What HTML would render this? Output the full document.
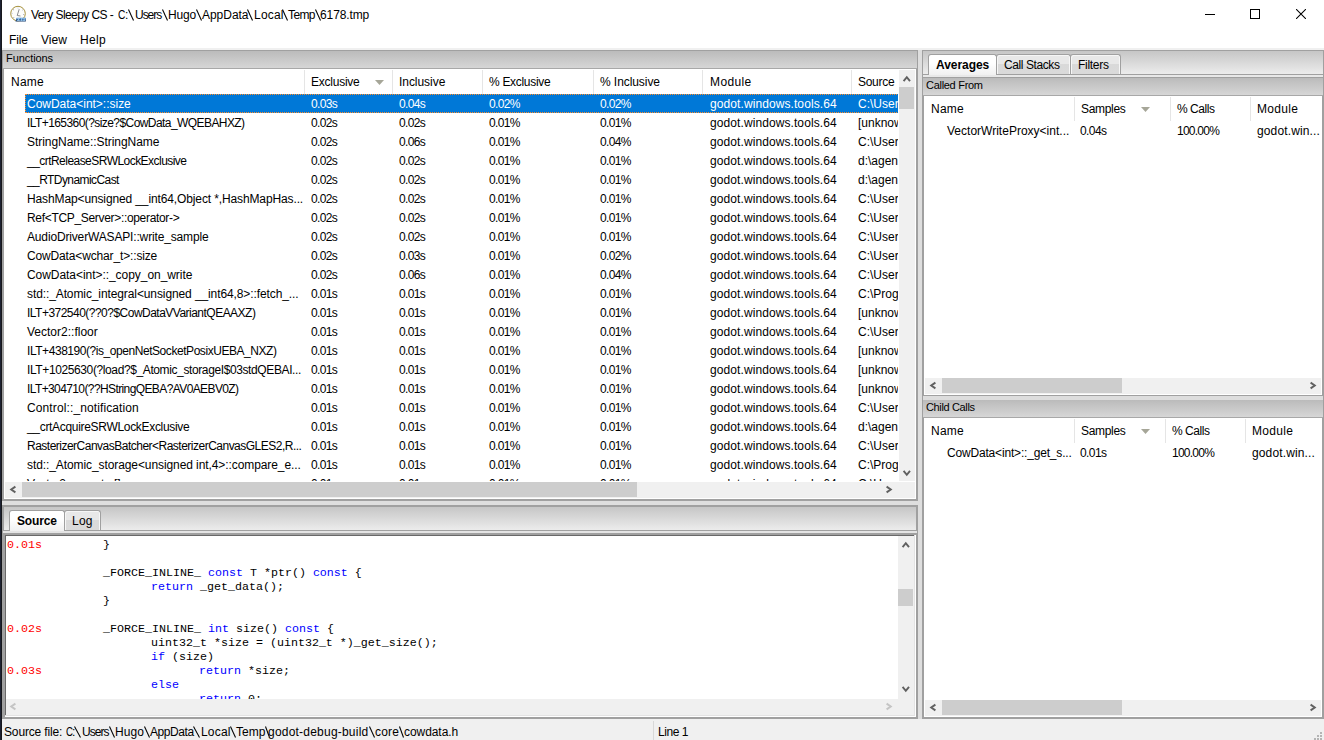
<!DOCTYPE html><html><head><meta charset="utf-8"><title>Very Sleepy CS</title><style>
*{margin:0;padding:0;box-sizing:border-box}
html,body{width:1324px;height:740px;overflow:hidden;background:#f0f0f0;position:relative;font-family:"Liberation Sans",sans-serif;font-size:12px;color:#000}
.a{position:absolute}
.t{position:absolute;white-space:pre;line-height:15px;height:15px}
.cap{position:absolute;background:linear-gradient(#bbbbbb,#d6d6d6)}
.sep{position:absolute;width:1px;background:#e5e5e5}
.mono{position:absolute;white-space:pre;font-family:"Liberation Mono",monospace;font-size:11.67px;line-height:14px;height:14px}
.kw{color:#0000ff}
.red{color:#ff0000}
svg{position:absolute}
svg.full{left:0;top:0;pointer-events:none}
.tab{position:absolute;border:1px solid #a0a0a0;border-bottom:none;border-radius:3px 3px 0 0}
.tabA{background:linear-gradient(#fff 40%,#f0f0f0)}
.tabI{background:linear-gradient(#e8e8e8 47%,#d9d9d9 47%,#dadada);box-shadow:inset 1px 1px 0 #f6f6f6,inset -1px 0 0 #f6f6f6}
</style></head><body>
<div class="a" style="left:0px;top:0px;width:1324px;height:48px;background:#fff;"></div>
<div class="a" style="left:0px;top:0px;width:1px;height:740px;background:#1d2232;"></div>
<div class="a" style="left:1px;top:0px;width:1px;height:740px;background:#17181c;"></div>
<svg style="left:9px;top:5px" width="18" height="18" viewBox="0 0 18 18">
<defs><linearGradient id="zg" x1="0" y1="0" x2="0" y2="1"><stop offset="0" stop-color="#4f8ccc"/><stop offset="1" stop-color="#1b3764"/></linearGradient></defs><circle cx="9" cy="8.6" r="7.3" fill="#fdfdfb" stroke="#a08a30" stroke-width="0.95"/>
<circle cx="9" cy="2.9" r="0.5" fill="#c0c0d0"/><circle cx="4.5" cy="4.8" r="0.5" fill="#9090a8"/><circle cx="3" cy="8.3" r="0.5" fill="#a0a0b8"/><circle cx="4.8" cy="12.4" r="0.5" fill="#a0a0b8"/><circle cx="14.5" cy="9.4" r="0.5" fill="#a0a0b8"/><circle cx="13.7" cy="5" r="0.5" fill="#b0b0c0"/>
<path d="M10.2 4.2L8.2 10.5L11.5 11" fill="none" stroke="#8c8c90" stroke-width="1"/>
<path d="M6.5 16.2L7.6 12.8L16.8 12.8L16.8 16.6L6.5 16.6Z" fill="url(#zg)"/>
<path d="M8.2 13.6L10.6 13.6L8.4 15.6L10.8 15.6M11.6 13.6L13.4 13.6L11.8 15.6L13.6 15.6M14.2 13.6L15.8 13.6L14.3 15.6L16 15.6" fill="none" stroke="#9fd0f6" stroke-width="0.9"/>
</svg>
<div class="t" style="left:118px;top:8px;transform:scaleX(0.85);transform-origin:0 0;">C</div>
<div class="t" style="left:31px;top:8px;letter-spacing:-0.572px;">Very Sleepy CS -</div>
<div class="t" style="left:125px;top:8px;">:</div>
<div class="t" style="left:135px;top:8px;letter-spacing:-1.036px;">Users</div>
<div class="t" style="left:168px;top:8px;letter-spacing:-0.163px;">Hugo</div>
<div class="t" style="left:202px;top:8px;letter-spacing:-0.034px;">AppData</div>
<div class="t" style="left:254px;top:8px;letter-spacing:0.203px;">Local</div>
<div class="t" style="left:288px;top:8px;letter-spacing:-0.615px;">Temp</div>
<div class="t" style="left:320px;top:8px;letter-spacing:-0.107px;">6178.tmp</div>
<svg style="left:128px;top:9px" width="6" height="12"><path d="M0.5 0.5L5.5 11.5" stroke="#000" stroke-width="1.05" fill="none"/></svg>
<svg style="left:162px;top:9px" width="6" height="12"><path d="M0.5 0.5L5.5 11.5" stroke="#000" stroke-width="1.05" fill="none"/></svg>
<svg style="left:196px;top:9px" width="6" height="12"><path d="M0.5 0.5L5.5 11.5" stroke="#000" stroke-width="1.05" fill="none"/></svg>
<svg style="left:247px;top:9px" width="6" height="12"><path d="M0.5 0.5L5.5 11.5" stroke="#000" stroke-width="1.05" fill="none"/></svg>
<svg style="left:282px;top:9px" width="6" height="12"><path d="M0.5 0.5L5.5 11.5" stroke="#000" stroke-width="1.05" fill="none"/></svg>
<svg style="left:315px;top:9px" width="6" height="12"><path d="M0.5 0.5L5.5 11.5" stroke="#000" stroke-width="1.05" fill="none"/></svg>
<div class="a" style="left:1205px;top:14px;width:10px;height:1px;background:#000;"></div>
<div class="a" style="left:1250px;top:9px;width:10px;height:10px;border:1px solid #000"></div>
<svg style="left:1296px;top:9px" width="10" height="10" viewBox="0 0 10 10"><path d="M0 0L10 10M10 0L0 10" stroke="#000" stroke-width="1.05"/></svg>
<div class="t" style="left:9px;top:33px;letter-spacing:-0.115px;">File</div>
<div class="t" style="left:41px;top:33px;letter-spacing:0.068px;">View</div>
<div class="t" style="left:80px;top:33px;letter-spacing:0.371px;">Help</div>
<div class="a" style="left:918px;top:50px;width:4px;height:669px;background:#dedede;"></div>
<div class="a" style="left:2px;top:501px;width:916px;height:4px;background:#dedede;"></div>
<div class="a" style="left:2px;top:50px;width:916px;height:451px;background:#a0a0a0;"></div>
<div class="a" style="left:3px;top:51px;width:914px;height:17px;background:;background:linear-gradient(#bbbbbb,#d6d6d6)"></div>
<div class="a" style="left:3px;top:68px;width:914px;height:1px;background:#a8a8a8;"></div>
<div class="a" style="left:4px;top:69px;width:912px;height:430px;background:#fff;"></div>
<div class="t" style="left:6px;top:51px;font-size:11px;letter-spacing:-0.075px;">Functions</div>
<div class="a" style="left:304px;top:70px;width:1px;height:24px;background:#e5e5e5;"></div>
<div class="a" style="left:392px;top:70px;width:1px;height:24px;background:#e5e5e5;"></div>
<div class="a" style="left:482px;top:70px;width:1px;height:24px;background:#e5e5e5;"></div>
<div class="a" style="left:593px;top:70px;width:1px;height:24px;background:#e5e5e5;"></div>
<div class="a" style="left:702px;top:70px;width:1px;height:24px;background:#e5e5e5;"></div>
<div class="a" style="left:851px;top:70px;width:1px;height:24px;background:#e5e5e5;"></div>
<div class="t" style="left:11px;top:75px;letter-spacing:0.228px;">Name</div>
<div class="t" style="left:311px;top:75px;letter-spacing:-0.236px;">Exclusive</div>
<div class="t" style="left:399px;top:75px;letter-spacing:-0.048px;">Inclusive</div>
<div class="t" style="left:489px;top:75px;letter-spacing:-0.309px;">% Exclusive</div>
<div class="t" style="left:600px;top:75px;letter-spacing:-0.070px;">% Inclusive</div>
<div class="t" style="left:710px;top:75px;letter-spacing:0.388px;">Module</div>
<div class="t" style="left:858px;top:75px;letter-spacing:-0.286px;">Source</div>
<svg style="left:375px;top:80px" width="9" height="5" viewBox="0 0 9 5"><path d="M0 0H9L4.5 5Z" fill="#a6a698"/></svg>
<div class="a" style="left:0px;top:94px;width:898px;height:387px;overflow:hidden">
<div class="a" style="left:25px;top:0px;width:880px;height:19px;background:#0078d7;outline:1px dotted #ff8c28;outline-offset:-1px"></div>
<div class="t" style="left:27px;top:3px;color:#fff;letter-spacing:-0.015px;">CowData&lt;int&gt;::size</div>
<div class="t" style="left:311px;top:3px;color:#fff;letter-spacing:-0.665px;">0.03s</div>
<div class="t" style="left:399px;top:3px;color:#fff;letter-spacing:-0.665px;">0.04s</div>
<div class="t" style="left:489px;top:3px;color:#fff;letter-spacing:-0.658px;">0.02%</div>
<div class="t" style="left:600px;top:3px;color:#fff;letter-spacing:-0.658px;">0.02%</div>
<div class="t" style="left:710px;top:3px;color:#fff;letter-spacing:0.088px;">godot.windows.tools.64</div>
<div class="t" style="left:858px;top:3px;color:#fff;width:41px;overflow:hidden;">C:\User</div>
<div class="t" style="left:27px;top:22px;letter-spacing:-0.572px;">ILT+165360(?size?$CowData_WQEBAHXZ)</div>
<div class="t" style="left:311px;top:22px;letter-spacing:-0.665px;">0.02s</div>
<div class="t" style="left:399px;top:22px;letter-spacing:-0.665px;">0.02s</div>
<div class="t" style="left:489px;top:22px;letter-spacing:-0.658px;">0.01%</div>
<div class="t" style="left:600px;top:22px;letter-spacing:-0.658px;">0.01%</div>
<div class="t" style="left:710px;top:22px;letter-spacing:0.088px;">godot.windows.tools.64</div>
<div class="t" style="left:858px;top:22px;width:41px;overflow:hidden;">[unknow</div>
<div class="t" style="left:27px;top:41px;letter-spacing:-0.047px;">StringName::StringName</div>
<div class="t" style="left:311px;top:41px;letter-spacing:-0.665px;">0.02s</div>
<div class="t" style="left:399px;top:41px;letter-spacing:-0.665px;">0.06s</div>
<div class="t" style="left:489px;top:41px;letter-spacing:-0.658px;">0.01%</div>
<div class="t" style="left:600px;top:41px;letter-spacing:-0.658px;">0.04%</div>
<div class="t" style="left:710px;top:41px;letter-spacing:0.088px;">godot.windows.tools.64</div>
<div class="t" style="left:858px;top:41px;width:41px;overflow:hidden;">C:\User</div>
<div class="t" style="left:27px;top:60px;letter-spacing:-0.538px;">__crtReleaseSRWLockExclusive</div>
<div class="t" style="left:311px;top:60px;letter-spacing:-0.665px;">0.02s</div>
<div class="t" style="left:399px;top:60px;letter-spacing:-0.665px;">0.02s</div>
<div class="t" style="left:489px;top:60px;letter-spacing:-0.658px;">0.01%</div>
<div class="t" style="left:600px;top:60px;letter-spacing:-0.658px;">0.01%</div>
<div class="t" style="left:710px;top:60px;letter-spacing:0.088px;">godot.windows.tools.64</div>
<div class="t" style="left:858px;top:60px;width:41px;overflow:hidden;">d:\agen</div>
<div class="t" style="left:27px;top:79px;letter-spacing:-0.577px;">__RTDynamicCast</div>
<div class="t" style="left:311px;top:79px;letter-spacing:-0.665px;">0.02s</div>
<div class="t" style="left:399px;top:79px;letter-spacing:-0.665px;">0.02s</div>
<div class="t" style="left:489px;top:79px;letter-spacing:-0.658px;">0.01%</div>
<div class="t" style="left:600px;top:79px;letter-spacing:-0.658px;">0.01%</div>
<div class="t" style="left:710px;top:79px;letter-spacing:0.088px;">godot.windows.tools.64</div>
<div class="t" style="left:858px;top:79px;width:41px;overflow:hidden;">d:\agen</div>
<div class="t" style="left:27px;top:98px;letter-spacing:-0.123px;">HashMap&lt;unsigned __int64,Object *,HashMapHas...</div>
<div class="t" style="left:311px;top:98px;letter-spacing:-0.665px;">0.02s</div>
<div class="t" style="left:399px;top:98px;letter-spacing:-0.665px;">0.02s</div>
<div class="t" style="left:489px;top:98px;letter-spacing:-0.658px;">0.01%</div>
<div class="t" style="left:600px;top:98px;letter-spacing:-0.658px;">0.01%</div>
<div class="t" style="left:710px;top:98px;letter-spacing:0.088px;">godot.windows.tools.64</div>
<div class="t" style="left:858px;top:98px;width:41px;overflow:hidden;">C:\User</div>
<div class="t" style="left:27px;top:117px;letter-spacing:-0.322px;">Ref&lt;TCP_Server&gt;::operator-&gt;</div>
<div class="t" style="left:311px;top:117px;letter-spacing:-0.665px;">0.02s</div>
<div class="t" style="left:399px;top:117px;letter-spacing:-0.665px;">0.02s</div>
<div class="t" style="left:489px;top:117px;letter-spacing:-0.658px;">0.01%</div>
<div class="t" style="left:600px;top:117px;letter-spacing:-0.658px;">0.01%</div>
<div class="t" style="left:710px;top:117px;letter-spacing:0.088px;">godot.windows.tools.64</div>
<div class="t" style="left:858px;top:117px;width:41px;overflow:hidden;">C:\User</div>
<div class="t" style="left:27px;top:136px;letter-spacing:-0.156px;">AudioDriverWASAPI::write_sample</div>
<div class="t" style="left:311px;top:136px;letter-spacing:-0.665px;">0.02s</div>
<div class="t" style="left:399px;top:136px;letter-spacing:-0.665px;">0.02s</div>
<div class="t" style="left:489px;top:136px;letter-spacing:-0.658px;">0.01%</div>
<div class="t" style="left:600px;top:136px;letter-spacing:-0.658px;">0.01%</div>
<div class="t" style="left:710px;top:136px;letter-spacing:0.088px;">godot.windows.tools.64</div>
<div class="t" style="left:858px;top:136px;width:41px;overflow:hidden;">C:\User</div>
<div class="t" style="left:27px;top:155px;letter-spacing:-0.148px;">CowData&lt;wchar_t&gt;::size</div>
<div class="t" style="left:311px;top:155px;letter-spacing:-0.665px;">0.02s</div>
<div class="t" style="left:399px;top:155px;letter-spacing:-0.665px;">0.03s</div>
<div class="t" style="left:489px;top:155px;letter-spacing:-0.658px;">0.01%</div>
<div class="t" style="left:600px;top:155px;letter-spacing:-0.658px;">0.02%</div>
<div class="t" style="left:710px;top:155px;letter-spacing:0.088px;">godot.windows.tools.64</div>
<div class="t" style="left:858px;top:155px;width:41px;overflow:hidden;">C:\User</div>
<div class="t" style="left:27px;top:174px;letter-spacing:-0.051px;">CowData&lt;int&gt;::_copy_on_write</div>
<div class="t" style="left:311px;top:174px;letter-spacing:-0.665px;">0.02s</div>
<div class="t" style="left:399px;top:174px;letter-spacing:-0.665px;">0.06s</div>
<div class="t" style="left:489px;top:174px;letter-spacing:-0.658px;">0.01%</div>
<div class="t" style="left:600px;top:174px;letter-spacing:-0.658px;">0.04%</div>
<div class="t" style="left:710px;top:174px;letter-spacing:0.088px;">godot.windows.tools.64</div>
<div class="t" style="left:858px;top:174px;width:41px;overflow:hidden;">C:\User</div>
<div class="t" style="left:27px;top:193px;letter-spacing:-0.103px;">std::_Atomic_integral&lt;unsigned __int64,8&gt;::fetch_...</div>
<div class="t" style="left:311px;top:193px;letter-spacing:-0.665px;">0.01s</div>
<div class="t" style="left:399px;top:193px;letter-spacing:-0.665px;">0.01s</div>
<div class="t" style="left:489px;top:193px;letter-spacing:-0.658px;">0.01%</div>
<div class="t" style="left:600px;top:193px;letter-spacing:-0.658px;">0.01%</div>
<div class="t" style="left:710px;top:193px;letter-spacing:0.088px;">godot.windows.tools.64</div>
<div class="t" style="left:858px;top:193px;width:41px;overflow:hidden;">C:\Prog</div>
<div class="t" style="left:27px;top:212px;letter-spacing:-0.517px;">ILT+372540(??0?$CowDataVVariantQEAAXZ)</div>
<div class="t" style="left:311px;top:212px;letter-spacing:-0.665px;">0.01s</div>
<div class="t" style="left:399px;top:212px;letter-spacing:-0.665px;">0.01s</div>
<div class="t" style="left:489px;top:212px;letter-spacing:-0.658px;">0.01%</div>
<div class="t" style="left:600px;top:212px;letter-spacing:-0.658px;">0.01%</div>
<div class="t" style="left:710px;top:212px;letter-spacing:0.088px;">godot.windows.tools.64</div>
<div class="t" style="left:858px;top:212px;width:41px;overflow:hidden;">[unknow</div>
<div class="t" style="left:27px;top:231px;letter-spacing:0.006px;">Vector2::floor</div>
<div class="t" style="left:311px;top:231px;letter-spacing:-0.665px;">0.01s</div>
<div class="t" style="left:399px;top:231px;letter-spacing:-0.665px;">0.01s</div>
<div class="t" style="left:489px;top:231px;letter-spacing:-0.658px;">0.01%</div>
<div class="t" style="left:600px;top:231px;letter-spacing:-0.658px;">0.01%</div>
<div class="t" style="left:710px;top:231px;letter-spacing:0.088px;">godot.windows.tools.64</div>
<div class="t" style="left:858px;top:231px;width:41px;overflow:hidden;">C:\User</div>
<div class="t" style="left:27px;top:250px;letter-spacing:-0.446px;">ILT+438190(?is_openNetSocketPosixUEBA_NXZ)</div>
<div class="t" style="left:311px;top:250px;letter-spacing:-0.665px;">0.01s</div>
<div class="t" style="left:399px;top:250px;letter-spacing:-0.665px;">0.01s</div>
<div class="t" style="left:489px;top:250px;letter-spacing:-0.658px;">0.01%</div>
<div class="t" style="left:600px;top:250px;letter-spacing:-0.658px;">0.01%</div>
<div class="t" style="left:710px;top:250px;letter-spacing:0.088px;">godot.windows.tools.64</div>
<div class="t" style="left:858px;top:250px;width:41px;overflow:hidden;">[unknow</div>
<div class="t" style="left:27px;top:269px;letter-spacing:-0.389px;">ILT+1025630(?load?$_Atomic_storageI$03stdQEBAI...</div>
<div class="t" style="left:311px;top:269px;letter-spacing:-0.665px;">0.01s</div>
<div class="t" style="left:399px;top:269px;letter-spacing:-0.665px;">0.01s</div>
<div class="t" style="left:489px;top:269px;letter-spacing:-0.658px;">0.01%</div>
<div class="t" style="left:600px;top:269px;letter-spacing:-0.658px;">0.01%</div>
<div class="t" style="left:710px;top:269px;letter-spacing:0.088px;">godot.windows.tools.64</div>
<div class="t" style="left:858px;top:269px;width:41px;overflow:hidden;">[unknow</div>
<div class="t" style="left:27px;top:288px;letter-spacing:-0.606px;">ILT+304710(??HStringQEBA?AV0AEBV0Z)</div>
<div class="t" style="left:311px;top:288px;letter-spacing:-0.665px;">0.01s</div>
<div class="t" style="left:399px;top:288px;letter-spacing:-0.665px;">0.01s</div>
<div class="t" style="left:489px;top:288px;letter-spacing:-0.658px;">0.01%</div>
<div class="t" style="left:600px;top:288px;letter-spacing:-0.658px;">0.01%</div>
<div class="t" style="left:710px;top:288px;letter-spacing:0.088px;">godot.windows.tools.64</div>
<div class="t" style="left:858px;top:288px;width:41px;overflow:hidden;">[unknow</div>
<div class="t" style="left:27px;top:307px;letter-spacing:0.114px;">Control::_notification</div>
<div class="t" style="left:311px;top:307px;letter-spacing:-0.665px;">0.01s</div>
<div class="t" style="left:399px;top:307px;letter-spacing:-0.665px;">0.01s</div>
<div class="t" style="left:489px;top:307px;letter-spacing:-0.658px;">0.01%</div>
<div class="t" style="left:600px;top:307px;letter-spacing:-0.658px;">0.01%</div>
<div class="t" style="left:710px;top:307px;letter-spacing:0.088px;">godot.windows.tools.64</div>
<div class="t" style="left:858px;top:307px;width:41px;overflow:hidden;">C:\User</div>
<div class="t" style="left:27px;top:326px;letter-spacing:-0.314px;">__crtAcquireSRWLockExclusive</div>
<div class="t" style="left:311px;top:326px;letter-spacing:-0.665px;">0.01s</div>
<div class="t" style="left:399px;top:326px;letter-spacing:-0.665px;">0.01s</div>
<div class="t" style="left:489px;top:326px;letter-spacing:-0.658px;">0.01%</div>
<div class="t" style="left:600px;top:326px;letter-spacing:-0.658px;">0.01%</div>
<div class="t" style="left:710px;top:326px;letter-spacing:0.088px;">godot.windows.tools.64</div>
<div class="t" style="left:858px;top:326px;width:41px;overflow:hidden;">d:\agen</div>
<div class="t" style="left:27px;top:345px;letter-spacing:-0.508px;">RasterizerCanvasBatcher&lt;RasterizerCanvasGLES2,R...</div>
<div class="t" style="left:311px;top:345px;letter-spacing:-0.665px;">0.01s</div>
<div class="t" style="left:399px;top:345px;letter-spacing:-0.665px;">0.01s</div>
<div class="t" style="left:489px;top:345px;letter-spacing:-0.658px;">0.01%</div>
<div class="t" style="left:600px;top:345px;letter-spacing:-0.658px;">0.01%</div>
<div class="t" style="left:710px;top:345px;letter-spacing:0.088px;">godot.windows.tools.64</div>
<div class="t" style="left:858px;top:345px;width:41px;overflow:hidden;">C:\User</div>
<div class="t" style="left:27px;top:364px;letter-spacing:-0.089px;">std::_Atomic_storage&lt;unsigned int,4&gt;::compare_e...</div>
<div class="t" style="left:311px;top:364px;letter-spacing:-0.665px;">0.01s</div>
<div class="t" style="left:399px;top:364px;letter-spacing:-0.665px;">0.01s</div>
<div class="t" style="left:489px;top:364px;letter-spacing:-0.658px;">0.01%</div>
<div class="t" style="left:600px;top:364px;letter-spacing:-0.658px;">0.01%</div>
<div class="t" style="left:710px;top:364px;letter-spacing:0.088px;">godot.windows.tools.64</div>
<div class="t" style="left:858px;top:364px;width:41px;overflow:hidden;">C:\Prog</div>
<div class="t" style="left:27px;top:383px;letter-spacing:-0.291px;">Vector2::operator[]</div>
<div class="t" style="left:311px;top:383px;letter-spacing:-0.665px;">0.01s</div>
<div class="t" style="left:399px;top:383px;letter-spacing:-0.665px;">0.01s</div>
<div class="t" style="left:489px;top:383px;letter-spacing:-0.658px;">0.01%</div>
<div class="t" style="left:600px;top:383px;letter-spacing:-0.658px;">0.01%</div>
<div class="t" style="left:710px;top:383px;letter-spacing:0.088px;">godot.windows.tools.64</div>
<div class="t" style="left:858px;top:383px;width:41px;overflow:hidden;">C:\User</div>
</div>
<div class="a" style="left:899px;top:70px;width:16px;height:411px;background:#f0f0f0;"></div>
<svg class="full" width="1324" height="740"><path d="M903.6 81.2L906.8 77.2L910 81.2" fill="none" stroke="#606060" stroke-width="1.9"/></svg>
<div class="a" style="left:899px;top:87px;width:15px;height:22px;background:#cdcdcd;"></div>
<svg class="full" width="1324" height="740"><path d="M903.6 470.8L906.8 474.8L910 470.8" fill="none" stroke="#606060" stroke-width="1.9"/></svg>
<div class="a" style="left:5px;top:482px;width:910px;height:16px;background:#f0f0f0;"></div>
<svg class="full" width="1324" height="740"><path d="M15.4 486.6L11.2 489.5L15.4 492.4" fill="none" stroke="#606060" stroke-width="1.9"/></svg>
<div class="a" style="left:22px;top:482px;width:615px;height:15px;background:#cdcdcd;"></div>
<svg class="full" width="1324" height="740"><path d="M886.6 486.6L890.8 489.5L886.6 492.4" fill="none" stroke="#606060" stroke-width="1.9"/></svg>
<div class="a" style="left:2px;top:505px;width:916px;height:214px;background:#a0a0a0;"></div>
<div class="a" style="left:4px;top:507px;width:912px;height:23px;background:;background:linear-gradient(#c6c6c6,#ececec)"></div>
<div class="a" style="left:3px;top:530px;width:914px;height:1px;background:#a0a0a0;"></div>
<div class="a" style="left:3px;top:531px;width:914px;height:2px;background:#e4e4e4;"></div>
<div class="tab tabA" style="left:9px;top:510px;width:56px;height:21px"></div>
<div class="tab tabI" style="left:64px;top:510px;width:37px;height:20px"></div>
<div class="t" style="left:17px;top:514px;font-weight:bold;letter-spacing:-0.138px;">Source</div>
<div class="t" style="left:72px;top:514px;letter-spacing:0.234px;">Log</div>
<div class="a" style="left:4px;top:533px;width:912px;height:184px;background:#fff;"></div>
<div class="a" style="left:4px;top:533px;width:912px;height:2px;background:#a0a0a0;"></div>
<div class="a" style="left:4px;top:533px;width:1px;height:184px;background:#a0a0a0;"></div>
<div class="a" style="left:5px;top:535px;width:910px;height:1px;background:#696969;"></div>
<div class="a" style="left:5px;top:535px;width:1px;height:181px;background:#696969;"></div>
<div class="a" style="left:914px;top:535px;width:1px;height:181px;background:#e3e3e3;"></div>
<div class="a" style="left:5px;top:715px;width:910px;height:1px;background:#e3e3e3;"></div>
<div class="a" style="left:6px;top:536px;width:892px;height:163px;overflow:hidden">
<div class="mono red" style="left:1px;top:2px">0.01s</div>
<div class="mono" style="left:97px;top:2px">}</div>
<div class="mono" style="left:97px;top:30px">_FORCE_INLINE_ <span class="kw">const</span> T *ptr() <span class="kw">const</span> {</div>
<div class="mono" style="left:145px;top:44px"><span class="kw">return</span> _get_data();</div>
<div class="mono" style="left:97px;top:58px">}</div>
<div class="mono red" style="left:1px;top:86px">0.02s</div>
<div class="mono" style="left:97px;top:86px">_FORCE_INLINE_ <span class="kw">int</span> size() <span class="kw">const</span> {</div>
<div class="mono" style="left:145px;top:100px">uint32_t *size = (uint32_t *)_get_size();</div>
<div class="mono" style="left:145px;top:114px"><span class="kw">if</span> (size)</div>
<div class="mono red" style="left:1px;top:128px">0.03s</div>
<div class="mono" style="left:193px;top:128px"><span class="kw">return</span> *size;</div>
<div class="mono" style="left:145px;top:142px"><span class="kw">else</span></div>
<div class="mono" style="left:193px;top:156px"><span class="kw">return</span> 0;</div>
</div>
<div class="a" style="left:898px;top:536px;width:16px;height:163px;background:#f0f0f0;"></div>
<svg class="full" width="1324" height="740"><path d="M902.6 547.2L905.8 543.2L909 547.2" fill="none" stroke="#606060" stroke-width="1.9"/></svg>
<div class="a" style="left:898px;top:589px;width:15px;height:17px;background:#cdcdcd;"></div>
<svg class="full" width="1324" height="740"><path d="M902.6 686.8L905.8 690.8L909 686.8" fill="none" stroke="#606060" stroke-width="1.9"/></svg>
<div class="a" style="left:6px;top:699px;width:908px;height:16px;background:#f0f0f0;"></div>
<svg class="full" width="1324" height="740"><path d="M15.4 703.6L11.2 706.5L15.4 709.4" fill="none" stroke="#c4c4c4" stroke-width="1.9"/></svg>
<svg class="full" width="1324" height="740"><path d="M886.6 703.6L890.8 706.5L886.6 709.4" fill="none" stroke="#c4c4c4" stroke-width="1.9"/></svg>
<div class="a" style="left:922px;top:50px;width:402px;height:669px;background:#a0a0a0;"></div>
<div class="a" style="left:923px;top:51px;width:400px;height:23px;background:;background:linear-gradient(#c6c6c6,#ececec)"></div>
<div class="a" style="left:923px;top:74px;width:400px;height:1px;background:#a0a0a0;"></div>
<div class="a" style="left:923px;top:75px;width:400px;height:2px;background:#e8e8e8;"></div>
<div class="tab tabA" style="left:928px;top:54px;width:69px;height:21px"></div>
<div class="tab tabI" style="left:996px;top:54px;width:75px;height:20px"></div>
<div class="tab tabI" style="left:1070px;top:54px;width:51px;height:20px"></div>
<div class="t" style="left:936px;top:58px;font-weight:bold;letter-spacing:-0.042px;">Averages</div>
<div class="t" style="left:1004px;top:58px;letter-spacing:-0.413px;">Call Stacks</div>
<div class="t" style="left:1078px;top:58px;letter-spacing:-0.295px;">Filters</div>
<div class="a" style="left:923px;top:78px;width:400px;height:17px;background:;background:linear-gradient(#bbbbbb,#d6d6d6)"></div>
<div class="a" style="left:923px;top:95px;width:400px;height:1px;background:#a8a8a8;"></div>
<div class="a" style="left:924px;top:96px;width:398px;height:299px;background:#fff;"></div>
<div class="t" style="left:926px;top:78px;font-size:11px;letter-spacing:-0.291px;">Called From</div>
<div class="a" style="left:1074px;top:97px;width:1px;height:24px;background:#e5e5e5;"></div>
<div class="a" style="left:1170px;top:97px;width:1px;height:24px;background:#e5e5e5;"></div>
<div class="a" style="left:1250px;top:97px;width:1px;height:24px;background:#e5e5e5;"></div>
<div class="t" style="left:931px;top:102px;letter-spacing:0.228px;">Name</div>
<div class="t" style="left:1081px;top:102px;letter-spacing:-0.315px;">Samples</div>
<div class="t" style="left:1177px;top:102px;letter-spacing:-0.448px;">% Calls</div>
<div class="t" style="left:1257px;top:102px;letter-spacing:0.328px;">Module</div>
<svg style="left:1141px;top:107px" width="9" height="5" viewBox="0 0 9 5"><path d="M0 0H9L4.5 5Z" fill="#a6a698"/></svg>
<div class="t" style="left:947px;top:124px;letter-spacing:0.007px;">VectorWriteProxy&lt;int...</div>
<div class="t" style="left:1080px;top:124px;letter-spacing:-0.590px;">0.04s</div>
<div class="t" style="left:1177px;top:124px;letter-spacing:-0.746px;">100.00%</div>
<div class="t" style="left:1257px;top:124px;letter-spacing:0.130px;">godot.win...</div>
<div class="a" style="left:925px;top:378px;width:396px;height:16px;background:#f0f0f0;"></div>
<svg class="full" width="1324" height="740"><path d="M935.4 382.6L931.2 385.5L935.4 388.4" fill="none" stroke="#606060" stroke-width="1.9"/></svg>
<div class="a" style="left:942px;top:378px;width:180px;height:15px;background:#cdcdcd;"></div>
<svg class="full" width="1324" height="740"><path d="M1310.6 382.6L1314.8 385.5L1310.6 388.4" fill="none" stroke="#606060" stroke-width="1.9"/></svg>
<div class="a" style="left:923px;top:396px;width:400px;height:4px;background:#dddddd;"></div>
<div class="a" style="left:923px;top:400px;width:400px;height:17px;background:;background:linear-gradient(#bbbbbb,#d6d6d6)"></div>
<div class="a" style="left:923px;top:417px;width:400px;height:1px;background:#a8a8a8;"></div>
<div class="a" style="left:924px;top:418px;width:398px;height:299px;background:#fff;"></div>
<div class="t" style="left:926px;top:400px;font-size:11px;letter-spacing:-0.358px;">Child Calls</div>
<div class="a" style="left:1074px;top:419px;width:1px;height:24px;background:#e5e5e5;"></div>
<div class="a" style="left:1165px;top:419px;width:1px;height:24px;background:#e5e5e5;"></div>
<div class="a" style="left:1245px;top:419px;width:1px;height:24px;background:#e5e5e5;"></div>
<div class="t" style="left:931px;top:424px;letter-spacing:0.228px;">Name</div>
<div class="t" style="left:1081px;top:424px;letter-spacing:-0.315px;">Samples</div>
<div class="t" style="left:1172px;top:424px;letter-spacing:-0.448px;">% Calls</div>
<div class="t" style="left:1252px;top:424px;letter-spacing:0.328px;">Module</div>
<svg style="left:1141px;top:429px" width="9" height="5" viewBox="0 0 9 5"><path d="M0 0H9L4.5 5Z" fill="#a6a698"/></svg>
<div class="t" style="left:947px;top:446px;letter-spacing:-0.180px;">CowData&lt;int&gt;::_get_s...</div>
<div class="t" style="left:1080px;top:446px;letter-spacing:-0.590px;">0.01s</div>
<div class="t" style="left:1172px;top:446px;letter-spacing:-0.746px;">100.00%</div>
<div class="t" style="left:1252px;top:446px;letter-spacing:0.130px;">godot.win...</div>
<div class="a" style="left:925px;top:700px;width:396px;height:16px;background:#f0f0f0;"></div>
<svg class="full" width="1324" height="740"><path d="M935.4 704.6L931.2 707.5L935.4 710.4" fill="none" stroke="#606060" stroke-width="1.9"/></svg>
<div class="a" style="left:942px;top:700px;width:180px;height:15px;background:#cdcdcd;"></div>
<svg class="full" width="1324" height="740"><path d="M1310.6 704.6L1314.8 707.5L1310.6 710.4" fill="none" stroke="#606060" stroke-width="1.9"/></svg>
<div class="t" style="left:66px;top:725px;transform:scaleX(0.8);transform-origin:0 0;">C</div>
<div class="t" style="left:4px;top:725px;letter-spacing:-0.148px;">Source file:</div>
<div class="t" style="left:72px;top:725px;">:</div>
<div class="t" style="left:82px;top:725px;letter-spacing:-0.936px;">Users</div>
<div class="t" style="left:115px;top:725px;letter-spacing:0.038px;">Hugo</div>
<div class="t" style="left:150px;top:725px;letter-spacing:-0.417px;">AppData</div>
<div class="t" style="left:201px;top:725px;letter-spacing:0.178px;">Local</div>
<div class="t" style="left:236px;top:725px;letter-spacing:0.052px;">Temp</div>
<div class="t" style="left:268px;top:725px;letter-spacing:0.216px;">godot-debug-build</div>
<div class="t" style="left:375px;top:725px;letter-spacing:0.219px;">core</div>
<div class="t" style="left:404px;top:725px;letter-spacing:-0.063px;">cowdata.h</div>
<svg style="left:74px;top:726px" width="7" height="12"><path d="M0.5 0.5L6.5 11.5" stroke="#000" stroke-width="1.05" fill="none"/></svg>
<svg style="left:109px;top:726px" width="6" height="12"><path d="M0.5 0.5L5.5 11.5" stroke="#000" stroke-width="1.05" fill="none"/></svg>
<svg style="left:144px;top:726px" width="6" height="12"><path d="M0.5 0.5L5.5 11.5" stroke="#000" stroke-width="1.05" fill="none"/></svg>
<svg style="left:193px;top:726px" width="7" height="12"><path d="M0.5 0.5L6.5 11.5" stroke="#000" stroke-width="1.05" fill="none"/></svg>
<svg style="left:230px;top:726px" width="6" height="12"><path d="M0.5 0.5L5.5 11.5" stroke="#000" stroke-width="1.05" fill="none"/></svg>
<svg style="left:265px;top:726px" width="5" height="12"><path d="M0.5 0.5L4.5 11.5" stroke="#000" stroke-width="1.05" fill="none"/></svg>
<svg style="left:369px;top:726px" width="6" height="12"><path d="M0.5 0.5L5.5 11.5" stroke="#000" stroke-width="1.05" fill="none"/></svg>
<svg style="left:399px;top:726px" width="5" height="12"><path d="M0.5 0.5L4.5 11.5" stroke="#000" stroke-width="1.05" fill="none"/></svg>
<div class="a" style="left:653px;top:721px;width:1px;height:19px;background:#d8d8d8;"></div>
<div class="t" style="left:658px;top:725px;letter-spacing:-0.441px;">Line 1</div>
<div class="a" style="left:1320px;top:732px;width:2px;height:2px;background:#b4b4b4"></div><div class="a" style="left:1317px;top:735px;width:2px;height:2px;background:#b4b4b4"></div><div class="a" style="left:1320px;top:735px;width:2px;height:2px;background:#b4b4b4"></div><div class="a" style="left:1314px;top:738px;width:2px;height:2px;background:#b4b4b4"></div><div class="a" style="left:1317px;top:738px;width:2px;height:2px;background:#b4b4b4"></div><div class="a" style="left:1320px;top:738px;width:2px;height:2px;background:#b4b4b4"></div>
</body></html>
